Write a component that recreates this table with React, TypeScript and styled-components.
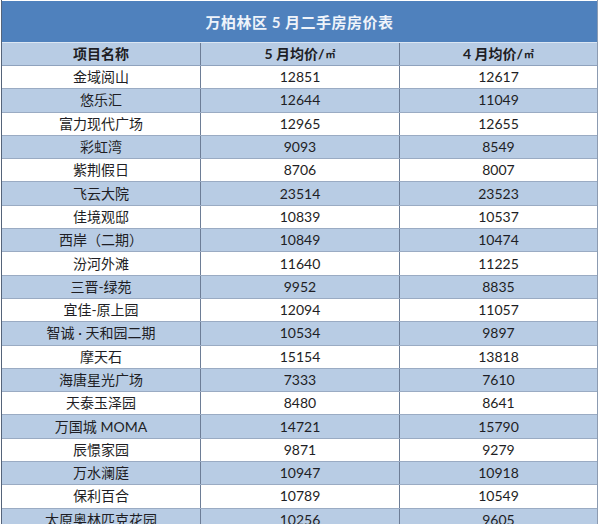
import React from 'react';
import styled, { createGlobalStyle } from 'styled-components';

const GlobalStyle = createGlobalStyle`
	html, body {
		margin: 0;
		padding: 0;
		background: #ffffff;
		overflow: hidden;
	}
	body {
		font-family: Lato, "Noto Sans CJK SC", sans-serif;
	}
`

const Sheet = styled.div`
	width: 595px;
	margin-left: 1px;
	padding-top: 1px;
	border-left: 1px solid #55647a;
	border-right: 1px solid #8c9bb1;
	height: 524px;
	overflow: hidden;
`

const Title = styled.div`
	height: 41px;
	background: #4f81bd;
	color: #eef3fa;
	font-size: 15px;
	font-weight: bold;
	display: flex;
	align-items: center;
	justify-content: center;
	border-bottom: 1px solid #dbe6f3;
	letter-spacing: 0.5px;
`

const Row = styled.div<{ $shaded?: boolean; $head?: boolean }>`
	display: grid;
	grid-template-columns: 199px 199px 197px;
	height: ${props => props.$head ? '22px' : '22.3px'};
	background: ${props => props.$shaded ? '#b8cce4' : '#ffffff'};
	border-bottom: 1px solid ${props => props.$head ? '#8fa2bd' : '#9aabc3'};
	font-weight: ${props => props.$head ? 'bold' : 'normal'};
	font-size: 14px;
	color: #1e1e24;
`

const Cell = styled.div`
	display: flex;
	align-items: center;
	justify-content: center;
	white-space: nowrap;
	line-height: 1;
	&:not(:last-child) {
		border-right: 1px solid #6d7d96;
		box-sizing: border-box;
	}
`

const Unit = styled.span`
	font-size: 10px;
	font-weight: bold;
	margin-left: 1px;
`

const rows: [string, string, string][] = [
	['金域阅山', '12851', '12617'],
	['悠乐汇', '12644', '11049'],
	['富力现代广场', '12965', '12655'],
	['彩虹湾', '9093', '8549'],
	['紫荆假日', '8706', '8007'],
	['飞云大院', '23514', '23523'],
	['佳境观邸', '10839', '10537'],
	['西岸（二期）', '10849', '10474'],
	['汾河外滩', '11640', '11225'],
	['三晋-绿苑', '9952', '8835'],
	['宜佳-原上园', '12094', '11057'],
	['智诚 · 天和园二期', '10534', '9897'],
	['摩天石', '15154', '13818'],
	['海唐星光广场', '7333', '7610'],
	['天泰玉泽园', '8480', '8641'],
	['万国城 MOMA', '14721', '15790'],
	['辰憬家园', '9871', '9279'],
	['万水澜庭', '10947', '10918'],
	['保利百合', '10789', '10549'],
	['太原奥林匹克花园', '10256', '9605'],
];

export default function App() {
	return (
		<>
			<GlobalStyle />
			<Sheet>
				<Title>万柏林区 5 月二手房房价表</Title>
				<Row $head $shaded>
					<Cell>项目名称</Cell>
					<Cell>5 月均价/<Unit>㎡</Unit></Cell>
					<Cell>4 月均价/<Unit>㎡</Unit></Cell>
				</Row>
				{rows.map((r, i) => (
					<Row key={r[0]} $shaded={i % 2 === 1}>
						<Cell>{r[0]}</Cell>
						<Cell>{r[1]}</Cell>
						<Cell>{r[2]}</Cell>
					</Row>
				))}
			</Sheet>
		</>
	)
}
